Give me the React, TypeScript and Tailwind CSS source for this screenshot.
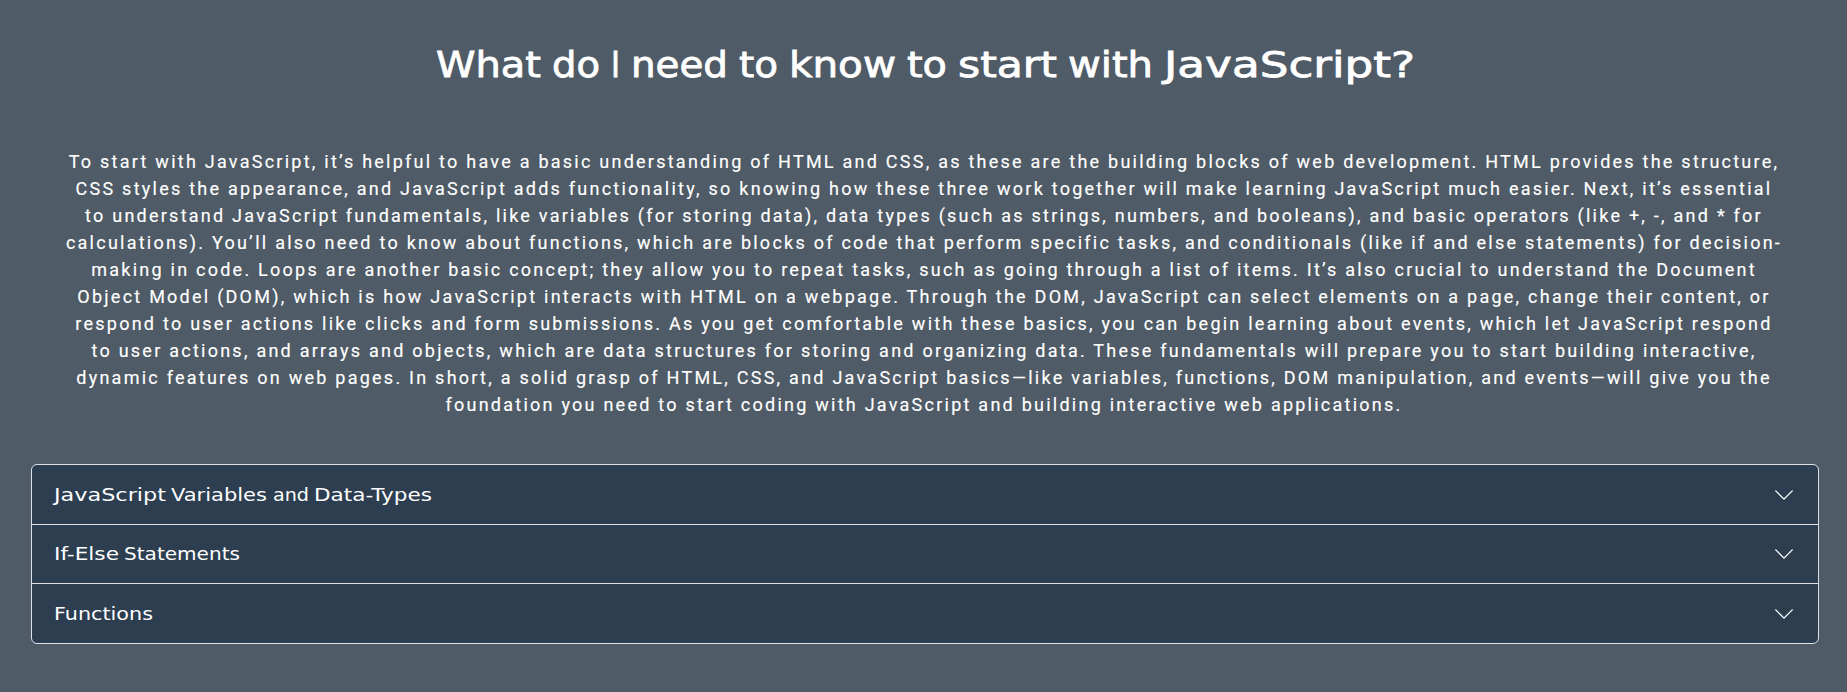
import { useLayoutEffect, useRef, useState } from 'react';

type WordSpec = { text: string; width: number };

const heading: WordSpec[] = [
  { text: 'What', width: 105 },
  { text: 'do', width: 48 },
  { text: 'I', width: 9 },
  { text: 'need', width: 97 },
  { text: 'to', width: 39 },
  { text: 'know', width: 107 },
  { text: 'to', width: 40 },
  { text: 'start', width: 99 },
  { text: 'with', width: 85 },
  { text: 'JavaScript?', width: 251 },
];

const topics: { words: WordSpec[]; row: string; icon: string }[] = [
  {
    words: [
      { text: 'JavaScript', width: 112 },
      { text: 'Variables', width: 96 },
      { text: 'and', width: 36 },
      { text: 'Data-Types', width: 118 },
    ],
    row: 'h-[60px] pt-4',
    icon: 'mt-[2.5px]',
  },
  {
    words: [
      { text: 'If-Else', width: 65 },
      { text: 'Statements', width: 116 },
    ],
    row: 'h-[59px] pt-[15px]',
    icon: 'mt-[2.5px]',
  },
  { words: [{ text: 'Functions', width: 99 }], row: 'h-[59px] pt-4', icon: 'mt-[2.5px]' },
];

/** A word in the wide display face, stretched horizontally to the given width. */
function WideWord({ text, width }: WordSpec) {
  const ref = useRef<HTMLSpanElement>(null);
  const [scale, setScale] = useState(1);

  useLayoutEffect(() => {
    if (ref.current) {
      setScale(width / parseFloat(getComputedStyle(ref.current).width));
    }
  }, [width]);

  return (
    <span className="block shrink-0" style={{ width }}>
      <span ref={ref} className="inline-block origin-left" style={{ transform: `scaleX(${scale})` }}>
        {text}
      </span>
    </span>
  );
}

function Chevron({ className }: { className: string }) {
  return (
    <svg className={`size-[22px] shrink-0 ${className}`} viewBox="0 0 16 16" fill="white" aria-hidden="true">
      <path
        fillRule="evenodd"
        d="M1.646 4.646a.5.5 0 0 1 .708 0L8 10.293l5.646-5.647a.5.5 0 0 1 .708.708l-6 6a.5.5 0 0 1-.708 0l-6-6a.5.5 0 0 1 0-.708z"
      />
    </svg>
  );
}

export default function App() {
  return (
    <main className="flex h-[692px] flex-col overflow-hidden bg-[#4f5b66] pt-10 text-white">
      <h1 className="flex h-[50px] justify-center gap-[11px] whitespace-nowrap pl-1 font-['DejaVu_Sans',sans-serif] text-[36px] leading-[50px] [-webkit-text-stroke:0.8px_white]">
        {heading.map((word, i) => (
          <WideWord key={i} {...word} />
        ))}
      </h1>
      <p className="ml-[63px] mt-[58px] w-[1722px] text-center font-[Roboto,sans-serif] text-[18px] leading-[27px] tracking-[2.245px] [-webkit-text-stroke:0.15px_white]">
        To start with JavaScript, it’s helpful to have a basic understanding of HTML and CSS, as these are the building
        blocks of web development. HTML provides the structure, CSS styles the appearance, and JavaScript adds
        functionality, so knowing how these three work together will make learning JavaScript much easier. Next, it’s
        essential to understand JavaScript fundamentals, like variables (for storing data), data types (such as strings,
        numbers, and booleans), and basic operators (like +, -, and * for calculations). You’ll also need to know about
        functions, which are blocks of code that perform specific tasks, and conditionals (like if and else statements)
        for decision-making in code. Loops are another basic concept; they allow you to repeat tasks, such as going
        through a list of items. It’s also crucial to understand the Document Object Model (DOM), which is how
        JavaScript interacts with HTML on a webpage. Through the DOM, JavaScript can select elements on a page, change
        their content, or respond to user actions like clicks and form submissions. As you get comfortable with these
        basics, you can begin learning about events, which let JavaScript respond to user actions, and arrays and
        objects, which are data structures for storing and organizing data. These fundamentals will prepare you to start
        building interactive, dynamic features on web pages. In short, a solid grasp of HTML, CSS, and JavaScript
        basics—like variables, functions, DOM manipulation, and events—will give you the foundation you need to start
        coding with JavaScript and building interactive web applications.
      </p>
      <div className="ml-[31px] mt-[46px] w-[1788px] divide-y divide-[#dee2e6] overflow-hidden rounded-md border border-[#dee2e6] bg-[#2c3e50]">
        {topics.map((topic, i) => (
          <button
            key={i}
            type="button"
            className={`flex w-full items-start justify-between pl-[21.5px] pr-[23px] text-left ${topic.row}`}
          >
            <span className="flex gap-[5.5px] whitespace-nowrap font-['DejaVu_Sans',sans-serif] text-[18px] leading-[27px]">
              {topic.words.map((word) => (
                <WideWord key={word.text} {...word} />
              ))}
            </span>
            <Chevron className={topic.icon} />
          </button>
        ))}
      </div>
    </main>
  );
}
